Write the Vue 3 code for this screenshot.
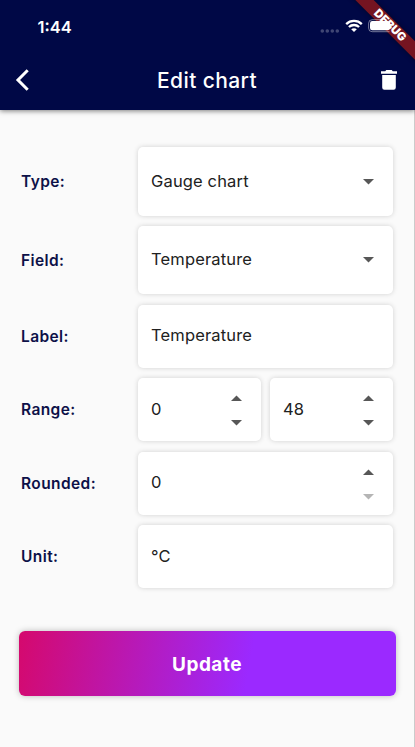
<script setup>
const rows = [
  { label: 'Type:', kind: 'select', fields: [{ value: 'Gauge chart' }] },
  { label: 'Field:', kind: 'select', fields: [{ value: 'Temperature' }] },
  { label: 'Label:', kind: 'text', fields: [{ value: 'Temperature' }] },
  { label: 'Range:', kind: 'number', fields: [{ value: '0' }, { value: '48' }] },
  { label: 'Rounded:', kind: 'number', fields: [{ value: '0', atMin: true }] },
  { label: 'Unit:', kind: 'text', fields: [{ value: '°C' }] },
]
</script>

<template>
  <div class="screen">
    <header class="top">
      <div class="ribbon">DEBUG</div>
      <div class="status">
        <span class="time">1:44</span>
        <div class="indicators">
          <svg class="dots" width="20" height="4" viewBox="0 0 20 4">
            <circle v-for="n in 4" :key="n" :cx="n * 5 - 2.7" cy="2" r="1.8" />
          </svg>
          <svg class="wifi" width="18" height="14" viewBox="0 0 18 14">
            <path d="M1.2 5.1C5.5.9 12.5.9 16.8 5.1M3.9 8C6.8 5.3 11.2 5.3 14.1 8" />
            <path class="tip" d="M9 13.1 6.2 10.3C7.8 8.8 10.2 8.8 11.8 10.3Z" />
          </svg>
          <svg class="battery" width="25" height="14" viewBox="0 0 25 14">
            <path class="shell" d="M21.5 12.7H4.2Q.6 12.7.6 9.1V4.3Q.6.7 4.2.7H16" />
            <rect class="charge" x="2" y="2.1" width="20" height="9.2" rx="2.3" />
          </svg>
        </div>
      </div>
      <nav class="bar">
        <svg class="back" width="15" height="22" viewBox="0 0 15 22">
          <path d="M12.7 1.3 3 11 12.7 20.7" />
        </svg>
        <h1>Edit chart</h1>
        <svg class="trash" width="16" height="20" viewBox="0 0 16 20">
          <path d="M1.2 5H14.8V17.6Q14.8 19.8 12.6 19.8H3.4Q1.2 19.8 1.2 17.6ZM0 1.2H4.2L5.3 0H10.7L11.8 1.2H16V3.7H0Z" />
        </svg>
      </nav>
    </header>

    <main class="form">
      <div v-for="row in rows" :key="row.label" class="row" :class="row.kind">
        <span class="label">{{ row.label }}</span>
        <div v-for="(field, i) in row.fields" :key="i" class="card">
          <span class="value">{{ field.value }}</span>
          <svg v-if="row.kind === 'select'" class="caret" width="11" height="6" viewBox="0 0 11 6"><path d="M0 0H11L5.5 5.6Z" /></svg>
          <div v-if="row.kind === 'number'" class="stepper">
            <svg width="11" height="6" viewBox="0 0 11 6"><path d="M0 6H11L5.5 .4Z" /></svg>
            <svg :class="{ disabled: field.atMin }" width="11" height="6" viewBox="0 0 11 6"><path d="M0 0H11L5.5 5.6Z" /></svg>
          </div>
        </div>
      </div>
      <button class="update">Update</button>
    </main>
  </div>
</template>

<style>
body {
  background: #fafafa;
}
</style>

<style scoped>
.screen {
  box-sizing: border-box;
  height: 747px;
  display: flex;
  flex-direction: column;
  overflow: hidden;
  background: #fafafa;
  font-family: Inter, "Liberation Sans", sans-serif;
}
.top {
  position: relative;
  z-index: 1;
  box-sizing: border-box;
  height: 110px;
  flex: none;
  background: #000846;
  color: #fff;
  box-shadow: 0 1px 5px rgba(0, 0, 0, 0.5);
  clip-path: inset(0 0 -12px 0);
}
.status {
  position: relative;
  display: flex;
  align-items: center;
  justify-content: space-between;
  height: 52px;
  padding: 0 22px 0 37.5px;
}
.time {
  font-size: 16.5px;
  font-weight: 600;
  line-height: 20px;
  padding-top: 2px;
}
.indicators {
  display: flex;
  align-items: center;
}
.dots {
  fill: #fff;
  opacity: 0.25;
  margin: 10px 5px 0 0;
}
.wifi {
  fill: none;
  stroke: #fff;
  stroke-width: 2.3;
  margin-right: 5.5px;
}
.tip {
  fill: #fff;
  stroke: none;
}
.shell {
  fill: none;
  stroke: #fff;
  stroke-opacity: 0.45;
}
.charge {
  fill: #fff;
}
.bar {
  display: flex;
  align-items: center;
  justify-content: space-between;
  height: 56px;
  padding: 0 18px 0 15px;
}
.back {
  fill: none;
  stroke: #fff;
  stroke-width: 3;
}
h1 {
  margin: 1px 0 0 3px;
  font-size: 21px;
  font-weight: 500;
  line-height: 26px;
  letter-spacing: 0.4px;
}
.trash {
  fill: #fff;
}
.ribbon {
  position: absolute;
  top: 19px;
  left: 339.5px;
  width: 100px;
  height: 13px;
  transform: rotate(45deg);
  background: #751421;
  font-size: 11.5px;
  font-weight: 900;
  line-height: 13px;
  text-align: center;
  box-shadow: 0 0 5px rgba(0, 0, 0, 0.45);
}
.form {
  flex: 1;
  display: flex;
  flex-direction: column;
  gap: 10.5px;
  padding: 37.4px 21px 0 21px;
  border-right: 1px solid #cbcbcb;
}
.row {
  display: flex;
  gap: 8.5px;
  height: 63px;
}
.row.select {
  height: 68.3px;
}
.label {
  width: 108px;
  flex: none;
  align-self: center;
  padding-top: 1px;
  color: #0d1148;
  font-size: 15.5px;
  font-weight: 600;
  line-height: 20px;
  letter-spacing: 0.4px;
}
.card {
  flex: 1;
  display: flex;
  align-items: center;
  justify-content: space-between;
  box-sizing: border-box;
  padding: 0 19.5px 0 13.5px;
  border-radius: 5px;
  background: #fff;
  box-shadow: 0 0 5px rgba(0, 0, 0, 0.17);
}
.value {
  color: #212121;
  font-size: 16.5px;
  line-height: 20px;
  letter-spacing: 0.15px;
  margin-bottom: 2px;
}
.caret,
.stepper {
  fill: #575757;
}
.stepper {
  display: flex;
  flex-direction: column;
  gap: 19px;
  padding-top: 2px;
}
.stepper .disabled {
  fill: #b5b5b5;
}
.update {
  height: 65px;
  flex: none;
  margin: 31.6px -2.5px 0 -2.5px;
  padding: 3px 0 0;
  border: 0;
  border-radius: 6px;
  background: linear-gradient(100deg, #d5096d 0%, #9b29ff 61%);
  box-shadow: 0 0 6px rgba(0, 0, 0, 0.25);
  color: #fff;
  font: 700 19px/24px Inter, sans-serif;
  letter-spacing: 0.5px;
}
</style>
